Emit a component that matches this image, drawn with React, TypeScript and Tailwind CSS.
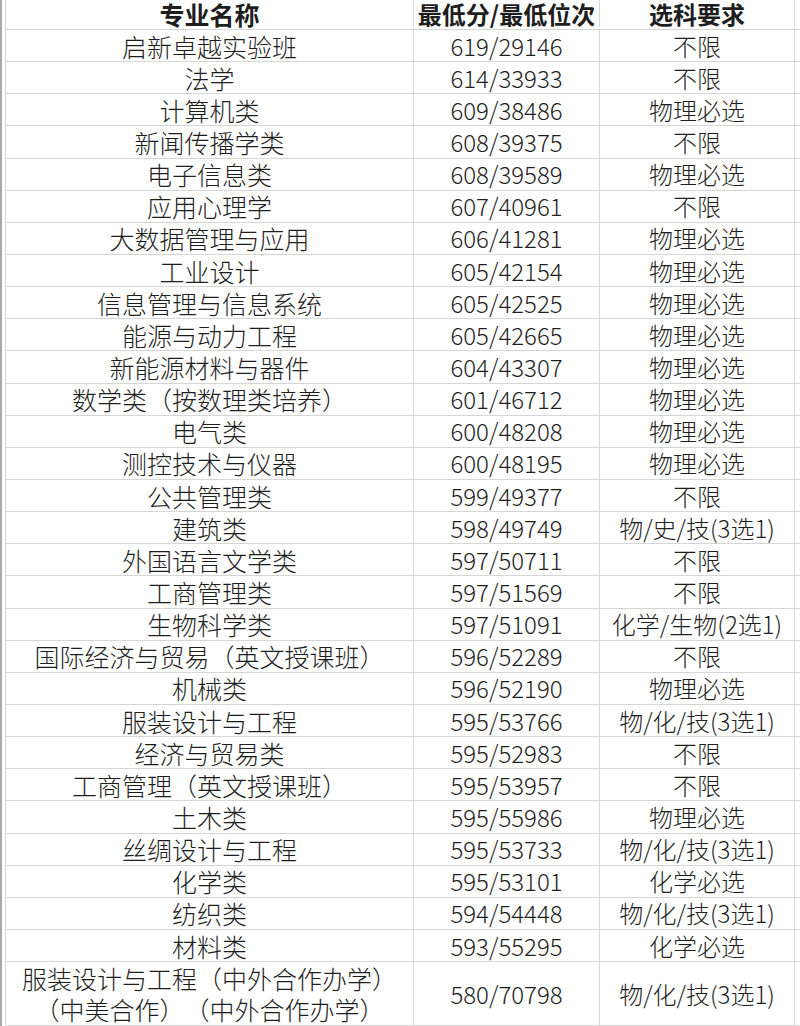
import React from "react";

const rows: [string, string, string][] = [
  ["启新卓越实验班", "619/29146", "不限"],
  ["法学", "614/33933", "不限"],
  ["计算机类", "609/38486", "物理必选"],
  ["新闻传播学类", "608/39375", "不限"],
  ["电子信息类", "608/39589", "物理必选"],
  ["应用心理学", "607/40961", "不限"],
  ["大数据管理与应用", "606/41281", "物理必选"],
  ["工业设计", "605/42154", "物理必选"],
  ["信息管理与信息系统", "605/42525", "物理必选"],
  ["能源与动力工程", "605/42665", "物理必选"],
  ["新能源材料与器件", "604/43307", "物理必选"],
  ["数学类（按数理类培养）", "601/46712", "物理必选"],
  ["电气类", "600/48208", "物理必选"],
  ["测控技术与仪器", "600/48195", "物理必选"],
  ["公共管理类", "599/49377", "不限"],
  ["建筑类", "598/49749", "物/史/技(3选1)"],
  ["外国语言文学类", "597/50711", "不限"],
  ["工商管理类", "597/51569", "不限"],
  ["生物科学类", "597/51091", "化学/生物(2选1)"],
  ["国际经济与贸易（英文授课班）", "596/52289", "不限"],
  ["机械类", "596/52190", "物理必选"],
  ["服装设计与工程", "595/53766", "物/化/技(3选1)"],
  ["经济与贸易类", "595/52983", "不限"],
  ["工商管理（英文授课班）", "595/53957", "不限"],
  ["土木类", "595/55986", "物理必选"],
  ["丝绸设计与工程", "595/53733", "物/化/技(3选1)"],
  ["化学类", "595/53101", "化学必选"],
  ["纺织类", "594/54448", "物/化/技(3选1)"],
  ["材料类", "593/55295", "化学必选"],
];

const font = {
  fontFamily: '"Noto Sans CJK SC", "Noto Sans", sans-serif',
};

function Row({
  a,
  b,
  c,
  className,
  bold,
}: {
  a: React.ReactNode;
  b: string;
  c: string;
  className: string;
  bold?: boolean;
}) {
  const w = bold ? "font-bold" : "font-light";
  return (
    <div className={`flex border-b border-[#d6d6d6] ${className}`}>
      <div className={`w-[408px] flex items-center justify-center border-r border-[#d6d6d6] text-[25px] ${w}`}>{a}</div>
      <div className={`w-[186px] flex items-center justify-center border-r border-[#d6d6d6] text-[24px] ${w}`}>{b}</div>
      <div className={`w-[195px] flex items-center justify-center border-r border-[#d6d6d6] text-[24px] ${w}`}>{c}</div>
      <div className="flex-1" />
    </div>
  );
}

export default function App() {
  return (
    <div
      className="w-[800px] h-[1026px] bg-white text-[#1e1e1e] leading-[30px] overflow-hidden flex"
      style={font}
    >
      <div className="w-[2px] bg-[#a9a9a9]" />
      <div className="w-[3px]" />
      <div className="flex-1 flex flex-col border-l border-[#dcdcdc]">
        <Row a="专业名称" b="最低分/最低位次" c="选科要求" className="h-[30px] pb-[2px]" bold />
        <div className="h-[932px] flex flex-col">
          {rows.map((r, i) => (
            <Row key={i} a={r[0]} b={r[1]} c={r[2]} className="flex-1" />
          ))}
        </div>
        <Row
          a={
            <div className="flex flex-col items-center leading-[31px]">
              <span>服装设计与工程（中外合作办学）</span>
              <span>（中美合作）　（中外合作办学）</span>
            </div>
          }
          b="580/70798"
          c="物/化/技(3选1)"
          className="h-[64px]"
        />
      </div>
    </div>
  );
}
